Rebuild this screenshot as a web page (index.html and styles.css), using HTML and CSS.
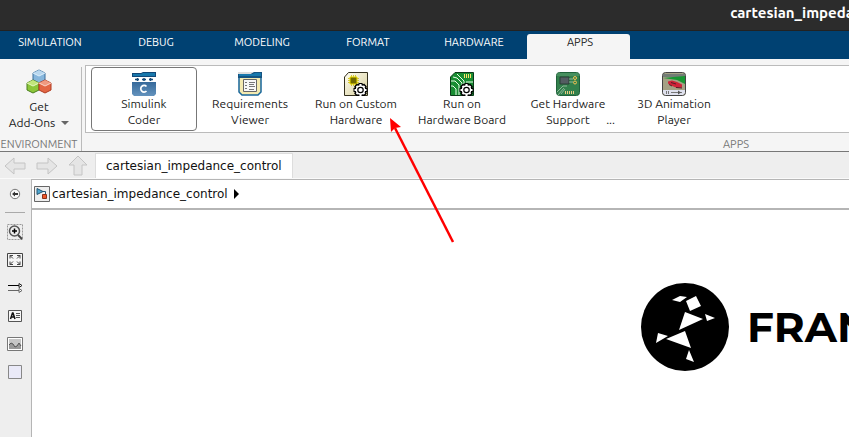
FILE: index.html
```html
<!DOCTYPE html>
<html lang="en">
<head>
<meta charset="utf-8">
<title>cartesian_impedance_control</title>
<link rel="stylesheet" href="styles.css">
</head>
<body>
<header class="titlebar"><h1>cartesian_impedance_control</h1></header>
<nav class="ribbon-tabs">
  <button>SIMULATION</button>
  <button>DEBUG</button>
  <button>MODELING</button>
  <button>FORMAT</button>
  <button>HARDWARE</button>
  <button class="active">APPS</button>
</nav>
<section class="ribbon">
  <div class="environment">
    <button class="addons">
      <svg width="26" height="26" viewBox="0 0 26 26">
        <g stroke-width="1">
          <path d="M13 1l6 3v7l-6 3-6-3V4z" fill="#86b6dc" stroke="#3b6f9c"/><path d="M13 1l6 3-6 3-6-3z" fill="#b9d7ee"/><path d="M7 4l6 3 6-3" fill="none" stroke="#dceefa"/>
          <path d="M7 11l6 3v7l-6 3-6-3v-7z" fill="#8cc63a" stroke="#4a7f1d"/><path d="M7 11l6 3-6 3-6-3z" fill="#c2e67c"/><path d="M1 14l6 3 6-3" fill="none" stroke="#e5f8c5"/>
          <path d="M19 11l6 3v7l-6 3-6-3v-7z" fill="#e26644" stroke="#b13b20"/><path d="M19 11l6 3-6 3-6-3z" fill="#f09a80"/><path d="M13 14l6 3 6-3" fill="none" stroke="#fad7cc"/>
        </g>
      </svg>
      <span>Get</span>
      <span class="menu-label">Add-Ons <svg width="8" height="4" viewBox="0 0 8 4"><path d="M0 0h8L4 4z" fill="#666"/></svg></span>
    </button>
    <div class="caption">ENVIRONMENT</div>
  </div>
  <div class="apps">
    <div class="gallery">
      <button class="app selected">
        <svg width="24" height="24" viewBox="0 0 24 24">
          <defs><linearGradient id="coder" x2="0" y2="1"><stop stop-color="#36699a"/><stop offset="1" stop-color="#6493bd"/></linearGradient></defs>
          <path d="M0 1h9l2-1h13v6H0z" fill="#124878"/><path d="M1 2h8l2-1h12v3H1z" fill="#1878ac"/><path d="M0 5h24v6H0z" fill="#fff"/>
          <path d="M3 7.500h4M5.500 6v3M10 7.500h4M12 6v3M17 7.500h4M18.500 6v3" stroke="#174b78" stroke-width="1.500"/>
          <path d="M0 10h24v12l-2 2H2l-2-2z" fill="url(#coder)"/><path d="M14.500 14.500a3.300 3.300 0 1 0 0 4.500" fill="none" stroke="#fff" stroke-width="1.700"/>
        </svg>
        <span>Simulink<br>Coder</span>
      </button>
      <button class="app">
        <svg width="24" height="24" viewBox="0 0 24 24">
          <path d="M1 4h22v16l-3 3H4l-3-3z" fill="#f4eab0" stroke="#17669a" stroke-width="1.500"/>
          <path d="M0 1h14l2-1h8v6H0z" fill="#155381"/><path d="M1 2h14l2-1h6v3H1z" fill="#1878ac"/><path d="M0 0h14v1l-1 1H0z" fill="#ddd"/>
          <path d="M5.500 7.500h13v12h-13z" fill="#f7f7f7" stroke="#666"/><path d="M7 10.500h2M7 13.500h2M7 16.500h2M11 10.500h6M11 12.500h5M11 14.500h6M11 17.500h5" stroke="#777"/>
        </svg>
        <span>Requirements<br>Viewer</span>
      </button>
      <button class="app">
        <svg width="24" height="24" viewBox="0 0 24 24">
          <defs><linearGradient id="card" x2="1" y2="1"><stop stop-color="#fffef0"/><stop offset="1" stop-color="#d6cd9c"/></linearGradient>
          <g id="gear"><circle r="6.500"/><path d="M0-7V7M-7 0H7M-5-5L5 5M-5 5L5-5" stroke="#000" stroke-width="4"/><path d="M0-6V6M-6 0H6M-4-4L4 4M-4 4L4-4" stroke="#fff" stroke-width="2"/><circle r="4.800" fill="#fff"/><circle r="2.700" fill="#fff" stroke="#000" stroke-width="1.200"/></g></defs>
          <path d="M4.500.5h19v23H.5V5z" fill="url(#card)" stroke="#332f1c"/>
          <path d="M7.500 3v11M9.500 3v11M11.500 3v11M4 6.500h11M4 8.500h11M4 10.500h11" stroke="#d0c23c"/><path d="M6 5h7v7H6z" fill="#706800" stroke="#eee000"/>
          <use href="#gear" x="16.500" y="18"/>
        </svg>
        <span>Run on Custom<br>Hardware</span>
      </button>
      <button class="app">
        <svg width="24" height="24" viewBox="0 0 24 24">
          <path d="M5 .5h18.500v23H.5V5z" fill="#188d32" stroke="#0b3918"/>
          <path d="M1 9h4l4 4v10M3 5l4 1 5 5v4M7 2l2 2 5 5v4M1 14h2l3 3v6M16 10h7" fill="none" stroke="#e9ffe9"/><path d="M14.500 2v4M16.500 2v4M18.500 2v4M20.500 2v4" stroke="#ffe36a"/>
          <use href="#gear" x="16.500" y="18"/>
        </svg>
        <span>Run on<br>Hardware Board</span>
      </button>
      <button class="app">
        <svg width="24" height="24" viewBox="0 0 24 24">
          <rect x=".5" y=".5" width="23" height="23" rx="3" fill="#32804c" stroke="#20613a"/><path d="M1 1h22v3H1z" fill="#5b9e70" opacity=".5"/>
          <path d="M4 5h9v7H4z" fill="#535c61" stroke="#283e34"/><path d="M1 20l6-6h4M2 23l6-7M5 22l4-5M13 7h4M13 10h4" fill="none" stroke="#8db698"/>
          <circle cx="19" cy="6" r="1.500" fill="none" stroke="#f4c152"/><circle cx="19" cy="10.500" r="1.500" fill="none" stroke="#f4c152"/>
          <path d="M9.500 19v3M11.500 19v3M13.500 19v3M15.500 19v3M17.500 19v3" stroke="#eacc82"/>
        </svg>
        <span>Get Hardware<br>Support</span><i class="more">...</i>
      </button>
      <button class="app">
        <svg width="24" height="24" viewBox="0 0 24 24">
          <rect x=".5" y=".5" width="23" height="23" rx="3" fill="#a4a184" stroke="#444"/><path d="M1 2h22v3H1z" fill="#747d76"/><path d="M1 6l10-1 12-1v8l-8-4z" fill="#189733"/>
          <path d="M6 9.500l4-1 5 1.500 5 2.500v3l-5 .5-6-2.500-3-2z" fill="#cf2338"/><path d="M9 10.500l5 1.500M7 12.500l3 1.500M14 15.500l6 .5" stroke="#571b29"/>
          <path d="M1 18h22v3l-2 2H3l-2-2z" fill="#dfe1ee"/><path d="M4.500 19v3M6.500 19v3M9 20.500h11" stroke="#777"/><path d="M16 18.500l3 2-3 2z" fill="#555"/>
        </svg>
        <span>3D Animation<br>Player</span>
      </button>
    </div>
    <div class="caption">APPS</div>
  </div>
</section>
<nav class="documents">
  <button class="nav-arrow" aria-label="Back"><svg width="22" height="20" viewBox="0 0 22 20"><path d="M1 10l9-8v5h11v6H10v5z"/></svg></button>
  <button class="nav-arrow" aria-label="Forward"><svg width="22" height="20" viewBox="0 0 22 20"><path d="M21 10l-9-8v5H1v6h11v5z"/></svg></button>
  <button class="nav-arrow" aria-label="Up"><svg width="20" height="20" viewBox="0 0 20 20"><path d="M10 0l9 9h-5v10H6V9H1z"/></svg></button>
  <button class="document">cartesian_impedance_control</button>
</nav>
<div class="workspace">
  <aside class="palette">
    <button aria-label="Hide browser"><svg width="16" height="16" viewBox="0 0 16 16"><circle cx="8" cy="8" r="4.700" fill="#f8f8f8" stroke="#777"/><path d="M5 8l3-2.500V7h3v2H8v1.500z" fill="#333"/></svg></button>
    <hr>
    <button aria-label="Zoom"><svg width="16" height="16" viewBox="0 0 16 16"><path d="M.5.5h15v15H.5z" fill="none" stroke="#999" stroke-dasharray="2 1"/><circle cx="7.500" cy="7" r="5" fill="#eee" stroke="#555" stroke-width="1.500"/><path d="M11 11l4 4" stroke="#444" stroke-width="2"/><path d="M5 7h5M7.500 4.500v5" stroke="#000" stroke-width="1.500"/></svg></button>
    <button aria-label="Fit to view"><svg width="16" height="14" viewBox="0 0 16 14"><path d="M.5.5h15v13H.5z" fill="#f5f5f5" stroke="#444"/><path d="M6 5.500L3 2.500v3m0-3h3M10 5.500l3-3v3m0-3h-3M6 8.500l-3 3v-3m0 3h3M10 8.500l3 3v-3m0 3h-3" fill="none" stroke="#444"/></svg></button>
    <button aria-label="Signal lines"><svg width="16" height="12" viewBox="0 0 16 12"><path d="M1 3.500h11" stroke="#000"/><path d="M12 1.500l3 2-3 2z" fill="#fff" stroke="#222"/><path d="M1 8.500h11M12 6.500l3 2-3 2z" fill="#fff" stroke="#666"/></svg></button>
    <button aria-label="Annotation"><svg width="14" height="12" viewBox="0 0 14 12"><path d="M.5.5h13v11H.5z" fill="#f7f7f7" stroke="#555"/><path d="M2.500 9l2-6h.5l2 6M3.500 7h3" fill="none" stroke="#111" stroke-width="1.500"/><path d="M8 3.500h4M8 5.500h4M8 7.500h4" stroke="#555"/></svg></button>
    <button aria-label="Image"><svg width="16" height="14" viewBox="0 0 16 14"><path d="M.5.5h15v13H.5z" fill="#fff" stroke="#777"/><path d="M2 2h12v10H2z" fill="#c6c6c6"/><path d="M2 8l2-2 2 1 2 3 2-1 2-3 2 3v3H2z" fill="#999"/><path d="M2 8l2-2 2 1 2 3 2-1 2-3 2 3" fill="none" stroke="#555"/></svg></button>
    <button aria-label="Area"><svg width="14" height="14" viewBox="0 0 14 14"><path d="M.5.5h13v13H.5z" fill="#eaeaf8" stroke="#888"/></svg></button>
  </aside>
  <main class="editor">
    <div class="breadcrumb">
      <svg width="16" height="16" viewBox="0 0 16 16"><path d="M.5.5h15v15H.5z" fill="#eee" stroke="#666"/><path d="M3 2.500l6 3-6 3z" fill="#4fa8d1" stroke="#235572"/><path d="M9 5.500h2.500v3" fill="none" stroke="#235572"/><path d="M8.500 8.500h4v4h-4z" fill="#ed5729" stroke="#8b2f18"/></svg>
      <a href="#">cartesian_impedance_control</a>
      <svg width="5" height="10" viewBox="0 0 5 10"><path d="M0 0l5 5-5 5z"/></svg>
    </div>
    <div class="canvas">
      <div class="brand">
        <svg width="88" height="88" viewBox="0 0 88 88"><circle cx="44" cy="44" r="44"/><path d="M31 17l8-4 7 1-7 5zM45 18l10-5 5 10-11 5zM44 29l18 7-24 11zM64 31l10 4-8 3zM17 50l10 3-12 7zM25 56l19-8 6 17zM48 67l5 12-8-3z" fill="#fff"/></svg>
        <span>FRANKA</span>
      </div>
    </div>
  </main>
</div>
<svg class="pointer" width="70" height="130" viewBox="0 0 70 130"><path d="M67 127L9 13" stroke="red" stroke-width="2.500"/><path d="M4 3l11 9-6 1-4 4z" fill="red"/></svg>
</body>
</html>
```
FILE: styles.css
```css
* { box-sizing: border-box; }
body {
  margin: 0;
  min-height: 100vh;
  display: flex;
  flex-direction: column;
  position: relative;
  overflow: hidden;
  background: #eee;
  color: #222;
  font: 12px/16px "Ubuntu", "Noto Sans", sans-serif;
}
button { margin: 0; padding: 0; border: 0; background: none; color: inherit; font: inherit; }
svg { display: block; flex: none; }
.titlebar { height: 31px; padding: 5px 0 0 86%; overflow: hidden; background: #2c2c2c; border-bottom: 1px solid #222; }
.titlebar h1 { margin: 0; color: #fff; font-size: 15px; line-height: 16px; font-weight: 700; white-space: nowrap; }
.ribbon-tabs { display: flex; gap: 3px; height: 28px; margin-left: -3px; padding-top: 3px; background: #004172; color: #fff; font-size: 11px; }
.ribbon-tabs button { flex: 0 0 103px; padding: 0 0 9px 3px; }
.ribbon-tabs .active { background: #f5f5f5; color: #222; border-radius: 3px 3px 0 0; }
.ribbon { display: flex; height: 93px; overflow: hidden; background: #f5f5f5; border-bottom: 1px solid #777; }
.environment { flex: 0 0 82px; display: flex; flex-direction: column; justify-content: space-between; margin-top: 8px; border-right: 1px solid #bbb; }
.addons { display: flex; flex-direction: column; align-items: center; width: 78px; padding-top: 2px; }
.addons > svg { margin-bottom: 4px; }
.menu-label { display: flex; align-items: center; gap: 6px; }
.caption { color: #777; font-size: 11px; line-height: 13px; text-align: center; }
.environment .caption { width: 78px; }
.apps { flex: 0 0 1308px; display: flex; flex-direction: column; justify-content: space-between; padding: 6px 3px 0; }
.gallery { display: flex; height: 68px; padding: 1px 5px; background: #fff; border: 1px solid #bbb; }
.app { position: relative; flex: 0 0 106px; display: flex; flex-direction: column; align-items: center; padding-top: 4px; border: 1px solid transparent; border-radius: 4px; }
.app.selected { border-color: #777; }
.more { position: absolute; right: 5px; bottom: 2px; font-style: normal; }
.documents { display: flex; align-items: flex-end; height: 27px; padding-left: 4px; border-bottom: 1px solid #fafafa; }
.nav-arrow { flex: 0 0 32px; height: 24px; }
.nav-arrow:nth-child(3) { flex-basis: 27px; }
.nav-arrow path { fill: #e5e5e5; stroke: #c4c4c4; }
.document { height: 25px; padding: 0 10px; background: #fff; border: 1px solid #ddd; border-bottom: 0; }
.document, .breadcrumb { font: 12px/16px "DejaVu Sans", sans-serif; color: #111; }
.workspace { flex: 1; display: flex; }
.palette { flex: 0 0 31px; display: flex; flex-direction: column; align-items: flex-start; padding-top: 1px; }
.palette button { display: grid; place-items: center; width: 30px; height: 28px; }
.palette hr { width: 20px; margin: 4px 0 5px 5px; border: 0; border-top: 1px solid #aaa; }
.editor { flex: 1; min-width: 0; display: flex; flex-direction: column; border-left: 1px solid #b5b5b5; background: #fff; }
.breadcrumb { display: flex; align-items: center; gap: 2px; height: 31px; padding-left: 2px; border-top: 1px solid #b5b5b5; border-bottom: 2px solid #b5b5b5; }
.breadcrumb a { color: inherit; text-decoration: none; margin-right: 4px; }
.canvas { flex: 1; overflow: hidden; padding: 73px 0 0 609px; }
.brand { display: flex; align-items: center; gap: 18px; color: #000; font: 700 42px/48px "Montserrat", Inter, sans-serif; }
.pointer { position: absolute; left: 386px; top: 115px; pointer-events: none; }
```
